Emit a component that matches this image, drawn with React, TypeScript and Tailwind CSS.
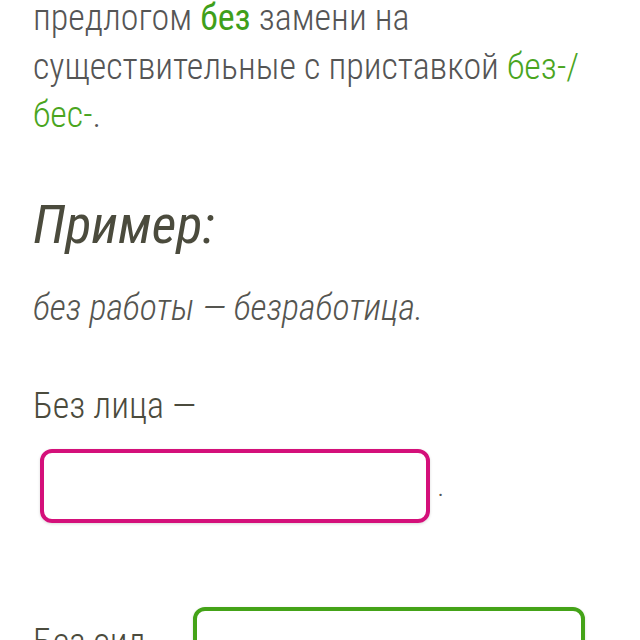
export default function App() {
  return (
    <div
      className="h-[640px] w-[640px] overflow-hidden bg-white px-[33px] text-[#555555] [font-stretch:condensed]"
      style={{ fontFamily: 'Roboto, "Liberation Sans", sans-serif' }}
    >
      <p className="-mt-[6px] text-[36px] font-light leading-[48.5px]">
        предлогом <b className="font-normal text-[#3f9f1a]">без</b> замени на
        <br />
        существительные с приставкой <span className="text-[#4aa51e]">без-/</span>
        <br />
        <span className="text-[#4aa51e]">бес-</span>.
      </p>

      <h3 className="mt-[53px] text-[54px] font-normal italic leading-[64px] text-[#4b4b3d]">
        Пример:
      </h3>

      <p className="mt-[27px] text-[36px] font-light italic leading-[48px] text-[#555550]">
        без работы — безработица.
      </p>

      <div className="mt-[50px] text-[36px] font-light leading-[48px] text-[#4b4b3d]">
        Без лица —
      </div>
      <div className="mt-[19px] flex items-end gap-[8px] pl-[7px]">
        <div className="h-[74px] w-[390px] rounded-[12px] border-[4px] border-[#d4107a] shadow-[0_1px_3px_rgba(0,0,0,0.15)]" />
        <span className="mb-[24px] text-[20px] leading-none text-[#555555]">.</span>
      </div>

      <div className="mt-[84px] flex items-start">
        <span className="mt-[11px] w-[160px] text-[36px] font-light leading-[48px] text-[#4b4b3d]">Без сил</span>
        <div className="h-[74px] w-[392px] rounded-[12px] border-[4px] border-[#44a318] shadow-[0_1px_3px_rgba(0,0,0,0.15)]" />
      </div>
    </div>
  );
}
